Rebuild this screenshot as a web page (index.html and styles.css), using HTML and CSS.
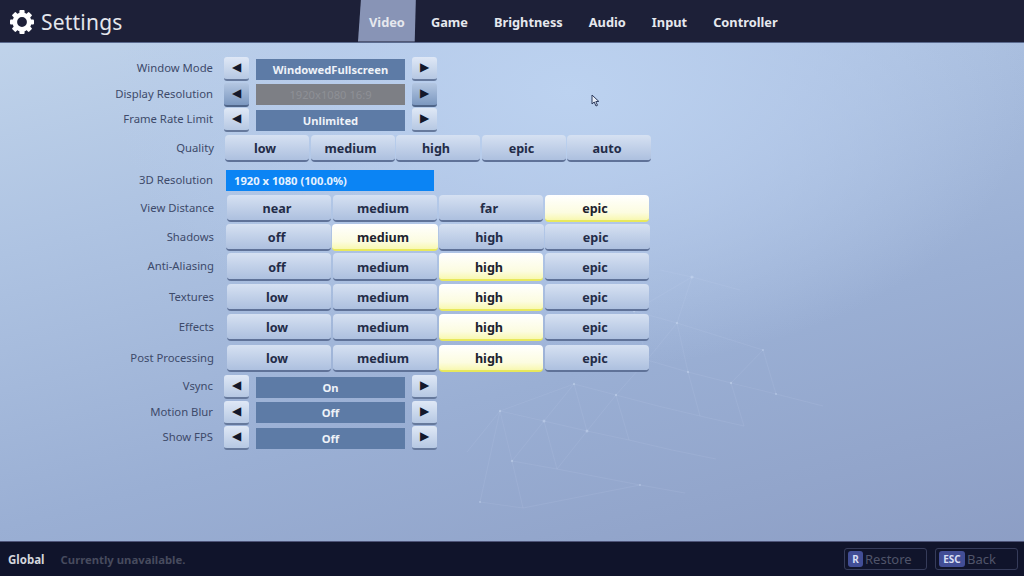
FILE: index.html
```html
<!DOCTYPE html>
<html lang="en">
<head>
<meta charset="utf-8">
<title>Settings</title>
<link rel="stylesheet" href="styles.css">
</head>
<body>
<div class="screen">
  <svg class="mesh" viewBox="0 0 1024 576" aria-hidden="true">
    <g class="mesh-lines">
      <path d="M500 411L544 421L587 431L629 440M574 384L544 421L512 461M574 384L587 431L557 469M616 395L587 431M574 384L616 395L658 406L700 416L744 426M544 421L557 469M500 411L512 461L557 469M616 395L629 440M634 311L647 360L616 395M634 311L677 323L647 360L688 372L731 383L776 394L823 406M677 323L688 372L700 416M731 383L744 426M467 452L500 411L480 502M512 461L523 508M672 450L716 459M629 440L672 450M574 384L500 411M692 277L634 311M692 277L677 323M692 277L660 270M692 277L740 290M763 350L731 383M480 502L523 508L640 485L685 493M557 469L640 485M763 350L776 394M677 323L763 350"/>
    </g>
    <g class="mesh-dots">
      <circle cx="544" cy="421" r="1.5"/><circle cx="587" cy="431" r="1.5"/><circle cx="574" cy="384" r="1.2"/><circle cx="616" cy="395" r="1.2"/><circle cx="500" cy="411" r="1.2"/><circle cx="512" cy="461" r="1.2"/><circle cx="634" cy="311" r="1.2"/><circle cx="677" cy="323" r="1.2"/><circle cx="647" cy="360" r="1.2"/><circle cx="688" cy="372" r="1.2"/><circle cx="731" cy="383" r="1.2"/><circle cx="692" cy="277" r="1.6"/><circle cx="776" cy="394" r="1"/><circle cx="763" cy="350" r="1"/><circle cx="480" cy="502" r="1"/><circle cx="640" cy="485" r="1"/>
    </g>
  </svg>

  <header class="topbar">
    <div class="brand">
      <svg class="gear" viewBox="0 0 24 24" aria-hidden="true">
        <g class="gear-teeth">
          <rect x="9.4" y="0" width="5.2" height="24" rx="1"/>
          <rect x="0" y="9.4" width="24" height="5.2" rx="1"/>
          <rect x="9.4" y="0" width="5.2" height="24" rx="1" transform="rotate(45 12 12)"/>
          <rect x="9.4" y="0" width="5.2" height="24" rx="1" transform="rotate(-45 12 12)"/>
        </g>
        <circle class="gear-ring" cx="12" cy="12" r="7.2"/>
      </svg>
      <h1 class="title">Settings</h1>
    </div>
    <nav class="tabs">
      <a class="tab tab-active">Video</a>
      <a class="tab">Game</a>
      <a class="tab">Brightness</a>
      <a class="tab">Audio</a>
      <a class="tab">Input</a>
      <a class="tab">Controller</a>
    </nav>
  </header>

  <main class="panel">
    <div class="row row-step">
      <span class="label">Window Mode</span>
      <button class="arrow">◀</button><div class="value">WindowedFullscreen</div><button class="arrow">▶</button>
    </div>
    <div class="row row-step">
      <span class="label">Display Resolution</span>
      <button class="arrow arrow-off">◀</button><div class="value value-off">1920x1080 16:9</div><button class="arrow arrow-off">▶</button>
    </div>
    <div class="row row-step">
      <span class="label">Frame Rate Limit</span>
      <button class="arrow">◀</button><div class="value">Unlimited</div><button class="arrow">▶</button>
    </div>
    <div class="row row-tier row-quality">
      <span class="label">Quality</span>
      <div class="opts opts-five">
        <button class="opt">low</button><button class="opt">medium</button><button class="opt">high</button><button class="opt">epic</button><button class="opt">auto</button>
      </div>
    </div>
    <div class="row row-res">
      <span class="label">3D Resolution</span>
      <div class="resbar">1920 x 1080 (100.0%)</div>
    </div>
    <div class="row row-tier row-view">
      <span class="label">View Distance</span>
      <div class="opts">
        <button class="opt">near</button><button class="opt">medium</button><button class="opt">far</button><button class="opt opt-on">epic</button>
      </div>
    </div>
    <div class="row row-tier mt2">
      <span class="label">Shadows</span>
      <div class="opts opts-wide">
        <button class="opt">off</button><button class="opt opt-on">medium</button><button class="opt">high</button><button class="opt">epic</button>
      </div>
    </div>
    <div class="row row-tier row-tall mt2">
      <span class="label">Anti-Aliasing</span>
      <div class="opts">
        <button class="opt">off</button><button class="opt">medium</button><button class="opt opt-on">high</button><button class="opt">epic</button>
      </div>
    </div>
    <div class="row row-tier mt3">
      <span class="label">Textures</span>
      <div class="opts">
        <button class="opt">low</button><button class="opt">medium</button><button class="opt opt-on">high</button><button class="opt">epic</button>
      </div>
    </div>
    <div class="row row-tier mt3">
      <span class="label">Effects</span>
      <div class="opts">
        <button class="opt">low</button><button class="opt">medium</button><button class="opt opt-on">high</button><button class="opt">epic</button>
      </div>
    </div>
    <div class="row row-tier mt4">
      <span class="label">Post Processing</span>
      <div class="opts">
        <button class="opt">low</button><button class="opt">medium</button><button class="opt opt-on">high</button><button class="opt">epic</button>
      </div>
    </div>
    <div class="row row-step mt3">
      <span class="label">Vsync</span>
      <button class="arrow">◀</button><div class="value">On</div><button class="arrow">▶</button>
    </div>
    <div class="row row-step">
      <span class="label">Motion Blur</span>
      <button class="arrow">◀</button><div class="value">Off</div><button class="arrow">▶</button>
    </div>
    <div class="row row-step">
      <span class="label">Show FPS</span>
      <button class="arrow">◀</button><div class="value">Off</div><button class="arrow">▶</button>
    </div>
  </main>

  <svg class="cursor" viewBox="0 0 9 13" aria-hidden="true">
    <path d="M1 1L1 10L3.2 8L5 12L6.5 11.3L4.8 7.6L7.8 7.4Z"/>
  </svg>

  <footer class="bottombar">
    <span class="scope">Global</span>
    <span class="status">Currently unavailable.</span>
    <div class="actions">
      <div class="action"><kbd class="key">R</kbd><span>Restore</span></div>
      <div class="action"><kbd class="key key-wide">ESC</kbd><span>Back</span></div>
    </div>
  </footer>
</div>
</body>
</html>
```

FILE: styles.css
```css
* { box-sizing: border-box; }

html, body {
  margin: 0;
  width: 1024px;
  height: 576px;
  overflow: hidden;
}

.screen {
  position: relative;
  width: 1024px;
  height: 576px;
  display: flex;
  flex-direction: column;
  font-family: "Noto Sans", "DejaVu Sans", sans-serif;
  background:
    radial-gradient(ellipse 460px 280px at 570px 90px, #bcd2f0 0%, rgba(184, 205, 237, 0.65) 50%, rgba(170, 190, 225, 0) 100%),
    linear-gradient(165deg, #c3d6ec 0%, #aec3e2 30%, #9aafd4 62%, #8b9cc3 100%);
}

.mesh {
  position: absolute;
  left: 0;
  top: 0;
  width: 1024px;
  height: 576px;
}

.mesh-lines {
  fill: none;
  stroke: rgba(205, 222, 245, 0.14);
  stroke-width: 0.8;
}

.mesh-dots { fill: rgba(215, 230, 250, 0.35); }

/* Top bar */
.topbar {
  position: relative;
  flex: none;
  height: 42px;
  padding-top: 1px;
  display: flex;
  align-items: center;
  background: #1d2038;
  box-shadow: 0 1px 0 #5a6a8e;
}

.brand {
  width: 369px;
  display: flex;
  align-items: center;
  gap: 7px;
  padding-left: 10px;
}

.gear { width: 24px; height: 24px; }
.gear-teeth rect { fill: #fff; }
.gear-ring { fill: #1d2038; stroke: #fff; stroke-width: 4.6; }

.title {
  margin: 0;
  font-size: 21px;
  font-weight: 400;
  color: #e4e6ec;
  letter-spacing: 0.2px;
}

.tabs {
  display: flex;
  gap: 26px;
  align-items: center;
}

.tab {
  position: relative;
  z-index: 0;
  font-size: 12.8px;
  font-weight: 700;
  color: #e6e8ee;
}

.tab-active::before {
  content: "";
  position: absolute;
  z-index: -1;
  left: -11px;
  right: -11px;
  top: -14px;
  bottom: -11px;
  background: #8894b6;
  clip-path: polygon(3px 0, 100% 0, 98% 100%, 0 100%);
}

/* Settings rows */
.panel {
  position: relative;
  flex: 1;
  display: flex;
  flex-direction: column;
  padding-top: 15px;
}

.row {
  display: flex;
  align-items: center;
  flex: none;
}

.label {
  width: 213px;
  padding-bottom: 3px;
  text-align: right;
  font-size: 11.3px;
  color: #3d4a6a;
}

.row-step {
  height: 24px;
  margin-bottom: 1.6px;
}

.row-step .arrow { margin-left: 11px; }
.row-step .value + .arrow { margin-left: 7px; }

.arrow {
  width: 25px;
  height: 24px;
  padding: 0 0 2px;
  border: 0;
  border-bottom: 2px solid #66799c;
  border-radius: 3px;
  background: linear-gradient(#dfe8f6, #b6c8e3);
  color: #14182a;
  font-family: "DejaVu Sans", sans-serif;
  font-size: 12px;
  line-height: 1;
}

.arrow-off {
  background: linear-gradient(#b4c7e2, #7c98c0);
  border-bottom-color: #4f6589;
}

.value {
  width: 149px;
  height: 21px;
  margin-left: 7px;
  background: #5d7ba6;
  color: #eef2f8;
  font-size: 11.2px;
  font-weight: 700;
  line-height: 21px;
  text-align: center;
}

.value-off {
  background: #7d7f85;
  color: #8e9096;
  font-weight: 400;
}

.row-tier { height: 27px; }
.row-tall { height: 28px; }
.row-tier .label { width: 214px; }

.row-quality { margin-top: 1.4px; }
.row-res { height: 21px; margin-top: 8px; }
.row-view { margin-top: 4px; }
.mt2 { margin-top: 2px; }
.mt3 { margin-top: 3px; }
.mt4 { margin-top: 4px; }

.opts {
  display: flex;
  gap: 2px;
  margin-left: 13px;
  height: 100%;
}

.opts-wide { margin-left: 12px; gap: 1px; }
.opts-wide .opt { width: 105.3px; }
.opts-five { margin-left: 11px; gap: 1.5px; }
.opts-five .opt { width: 84px; }

.opt {
  width: 104px;
  height: 100%;
  padding: 2px 4px 0 0;
  border: 0;
  border-bottom: 2.5px solid #5f7298;
  border-radius: 4px;
  background: linear-gradient(#d6e1f2, #adc0df);
  color: #232c48;
  font-family: "Noto Sans", sans-serif;
  font-size: 12.6px;
  font-weight: 700;
}

.opt-on {
  border-bottom-color: #e8e85c;
  background: linear-gradient(#ffffff 0%, #fcfce0 70%, #f8f8b0 100%);
  color: #20222c;
}

.resbar {
  width: 208px;
  height: 21px;
  margin-left: 13px;
  padding-left: 8px;
  background: #0b84f4;
  color: #e6f2ff;
  font-size: 11.2px;
  font-weight: 700;
  line-height: 21px;
}

.cursor {
  position: absolute;
  left: 591px;
  top: 94px;
  width: 9px;
  height: 13px;
}

.cursor path {
  fill: #e8eef8;
  stroke: #2c3a5c;
  stroke-width: 1;
}

/* Bottom bar */
.bottombar {
  position: relative;
  flex: none;
  height: 34px;
  display: flex;
  align-items: center;
  padding: 0 6px 0 8px;
  background: #10142b;
  box-shadow: 0 -1px 0 #4e5478;
}

.scope {
  font-size: 11.5px;
  font-weight: 700;
  color: #d4d6dc;
}

.status {
  margin-left: 16px;
  font-size: 11.3px;
  font-weight: 700;
  color: #474b5e;
}

.actions {
  margin-left: auto;
  display: flex;
  gap: 8px;
}

.action {
  width: 83px;
  height: 22px;
  display: flex;
  align-items: center;
  gap: 2px;
  padding-left: 3px;
  border: 1px solid #363c5a;
  border-radius: 3px;
  color: #50546a;
  font-size: 13px;
}

.key {
  height: 16px;
  min-width: 15px;
  padding: 0 2px;
  border-radius: 3px;
  background: #424e96;
  color: #d8def4;
  font-family: "Noto Sans", sans-serif;
  font-size: 10px;
  font-weight: 700;
  line-height: 16px;
  text-align: center;
}

.key-wide { min-width: 26px; }
```
